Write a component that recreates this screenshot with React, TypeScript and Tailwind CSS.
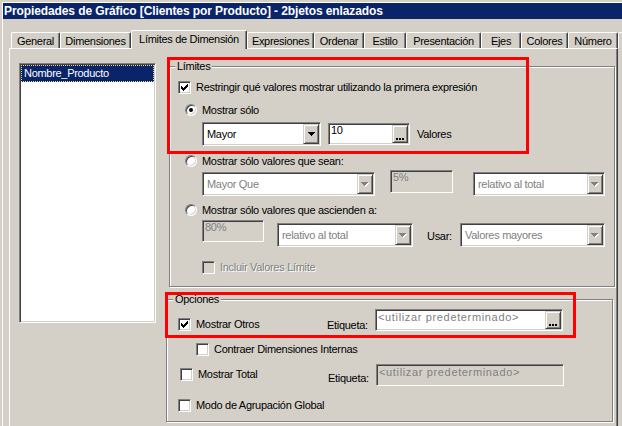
import React from "react";

const sunken =
  "border border-t-[#808080] border-l-[#808080] border-r-white border-b-white shadow-[inset_1px_1px_0_#404040,inset_-1px_-1px_0_#d4d0c8] p-[1px]";
const raised =
  "border border-t-[#d4d0c8] border-l-[#d4d0c8] border-r-[#404040] border-b-[#404040] shadow-[inset_1px_1px_0_#fff,inset_-1px_-1px_0_#808080] bg-[#d4d0c8]";
const etched =
  "relative border border-[#808080] shadow-[inset_1px_1px_0_#fff,1px_1px_0_#fff] flex flex-col items-start";
const disabledText = "text-[#808080] [text-shadow:1px_1px_0_#fff]";

const ARROW = "M0 0h7v1h-1v1h-1v1h-1v1h-1v-1h-1v-1h-1v-1h-1z";

function Arrow({ disabled }: { disabled?: boolean }) {
  if (disabled) {
    return (
      <svg width="8" height="5" viewBox="0 0 8 5" className="block">
        <path d={ARROW} transform="translate(1 1)" fill="#fff" />
        <path d={ARROW} fill="#808080" />
      </svg>
    );
  }
  return (
    <svg width="7" height="4" viewBox="0 0 7 4" className="block">
      <path d={ARROW} fill="#000" />
    </svg>
  );
}

function CheckMark() {
  const cols = [
    [0, 2],
    [1, 3],
    [2, 4],
    [3, 3],
    [4, 2],
    [5, 1],
    [6, 0],
  ];
  return (
    <svg width="9" height="9" viewBox="0 0 9 9" className="block">
      {cols.map(([x, y]) => (
        <rect key={x} x={x + 1} y={y + 1} width="1" height="3" fill="#000" />
      ))}
    </svg>
  );
}

function Check({ checked, disabled }: { checked?: boolean; disabled?: boolean }) {
  return (
    <div
      className={`${sunken} w-[13px] h-[13px] shrink-0 ${disabled ? "bg-[#d4d0c8]" : "bg-white"}`}
    >
      {checked && <CheckMark />}
    </div>
  );
}

function Radio({ checked }: { checked?: boolean }) {
  return (
    <div className="w-[12px] h-[12px] shrink-0 rounded-full border border-t-[#808080] border-l-[#808080] border-r-white border-b-white shadow-[inset_1px_1px_0_#404040,inset_-1px_-1px_0_#d4d0c8] bg-white flex items-center justify-center">
      {checked && <div className="w-[4px] h-[4px] rounded-full bg-black" />}
    </div>
  );
}

function Combo({
  className,
  text,
  disabled,
}: {
  className: string;
  text: string;
  disabled?: boolean;
}) {
  return (
    <div className={`${sunken} flex bg-white h-[24px] shrink-0 ${className}`}>
      <div
        className={`flex-1 flex items-center pl-[3px] whitespace-nowrap overflow-hidden ${
          disabled ? "text-[#808080]" : "text-black"
        }`}
      >
        {text}
      </div>
      <div className={`${raised} w-[16px] flex items-center justify-center`}>
        <Arrow disabled={disabled} />
      </div>
    </div>
  );
}

function DotsButton() {
  return (
    <div className={`${raised} w-[16px] flex items-end justify-center pb-[2px]`}>
      <svg width="8" height="2" viewBox="0 0 8 2" className="block">
        <rect x="0" y="0" width="2" height="2" fill="#000" />
        <rect x="3" y="0" width="2" height="2" fill="#000" />
        <rect x="6" y="0" width="2" height="2" fill="#000" />
      </svg>
    </div>
  );
}

function Edit({
  className,
  text,
  greyBg,
  greyText,
  dots,
  wide,
}: {
  className: string;
  text: string;
  greyBg?: boolean;
  greyText?: boolean;
  dots?: boolean;
  wide?: boolean;
}) {
  return (
    <div className={`${sunken} flex shrink-0 ${greyBg ? "bg-[#d4d0c8]" : "bg-white"} ${className}`}>
      <div
        className={`flex-1 pl-[1px] -mt-[1px] whitespace-nowrap overflow-hidden ${
          greyText ? "text-[#808080]" : "text-black"
        } ${wide ? "tracking-[0.65px] pt-[1px]" : ""}`}
      >
        {text}
      </div>
      {dots && <DotsButton />}
    </div>
  );
}

const tabs: { label: string; cls: string; selected?: boolean }[] = [
  { label: "General", cls: "w-[49px]" },
  { label: "Dimensiones", cls: "w-[71px]" },
  { label: "Límites de Dimensión", cls: "w-[116px]", selected: true },
  { label: "Expresiones", cls: "w-[67px]" },
  { label: "Ordenar", cls: "w-[50px]" },
  { label: "Estilo", cls: "w-[42px]" },
  { label: "Presentación", cls: "w-[75px]" },
  { label: "Ejes", cls: "w-[40px]" },
  { label: "Colores", cls: "w-[47px]" },
  { label: "Número", cls: "w-[50px]" },
];

export default function App() {
  return (
    <div className="relative w-[622px] h-[426px] overflow-hidden bg-[#d4d0c8] pt-[3px] pl-[3px] shadow-[inset_2px_2px_0_#d4d0c8,inset_3px_3px_0_#fff] font-['Liberation_Sans',Arial,sans-serif] text-[11px] leading-[13px] tracking-[-0.3px] text-black flex flex-col">
      {/* title bar */}
      <div className="h-[16px] shrink-0 bg-[#0a246a] text-white font-bold text-[12px] tracking-[-0.1px] flex items-center pl-[1px] whitespace-nowrap">
        Propiedades de Gráfico [Clientes por Producto] - 2bjetos enlazados
      </div>

      {/* tabs */}
      <div className="mt-[11px] h-[18px] shrink-0 flex items-end pl-[8px]">
        {tabs.map((t) =>
          t.selected ? (
            <div
              key={t.label}
              className={`${t.cls} relative z-10 h-[19px] -mb-[1px] shrink-0 bg-[#d4d0c8] border-t border-l border-white border-r border-r-[#404040] shadow-[inset_-1px_0_0_#808080] rounded-tl-[2px] rounded-tr-[2px] flex justify-center pt-[2px] whitespace-nowrap`}
            >
              {t.label}
            </div>
          ) : (
            <div
              key={t.label}
              className={`${t.cls} h-[16px] shrink-0 border-t border-l border-white border-r border-r-[#404040] shadow-[inset_-1px_0_0_#808080] rounded-tl-[2px] rounded-tr-[2px] flex justify-center pt-[2px] whitespace-nowrap`}
            >
              {t.label}
            </div>
          )
        )}
        <div className="w-[4px] h-[16px] shrink-0 border-t border-l border-white rounded-tl-[2px]" />
      </div>

      {/* tab panel */}
      <div className="ml-[6px] w-[609px] flex-1 border-t border-l border-white border-r border-r-[#404040] shadow-[inset_-1px_0_0_#808080] flex items-start">
        {/* list box */}
        <div className={`${sunken} bg-white w-[137px] h-[260px] ml-[9px] mt-[14px] shrink-0`}>
          <div className="h-[17px] bg-[#0a246a] text-white border border-dotted border-[#e8d48c] flex items-center pl-[2px] whitespace-nowrap">
            Nombre_Producto
          </div>
        </div>

        {/* right column */}
        <div className="flex flex-col items-start">
          {/* Límites */}
          <div className={`${etched} ml-[13px] mt-[17px] w-[446px] h-[221px]`}>
            <span className="absolute left-[5px] -top-[7px] px-[2px] bg-[#d4d0c8]">Límites</span>
            <div className="ml-[8px] mt-[14px] h-[13px] flex items-center">
              <Check checked />
              <span className="ml-[5px] whitespace-nowrap">
                Restringir qué valores mostrar utilizando la primera expresión
              </span>
            </div>
            <div className="ml-[15px] mt-[10px] h-[12px] flex items-center">
              <Radio checked />
              <span className="ml-[5px] mt-[1px] whitespace-nowrap">Mostrar sólo</span>
            </div>
            <div className="ml-[32px] mt-[6px] flex items-center">
              <Combo className="w-[119px]" text="Mayor" />
              <Edit className="ml-[7px] w-[82px] h-[22px]" text="10" dots />
              <span className="ml-[7px]">Valores</span>
            </div>
            <div className="ml-[15px] mt-[9px] h-[12px] flex items-center">
              <Radio />
              <span className="ml-[5px] mt-[1px] whitespace-nowrap">Mostrar sólo valores que sean:</span>
            </div>
            <div className="ml-[32px] mt-[3px] flex items-start">
              <Combo className="mt-[2px] w-[173px]" text="Mayor Que" disabled />
              <Edit className="ml-[15px] w-[63px] h-[23px]" text="5%" greyBg greyText />
              <Combo className="ml-[20px] mt-[2px] w-[132px]" text="relativo al total" disabled />
            </div>
            <div className="ml-[15px] mt-[8px] h-[12px] flex items-center">
              <Radio />
              <span className="ml-[5px] whitespace-nowrap">Mostrar sólo valores que ascienden a:</span>
            </div>
            <div className="ml-[32px] mt-[4px] flex items-start">
              <Edit className="w-[62px] h-[22px]" text="80%" greyBg greyText />
              <Combo className="ml-[13px] mt-[3px] w-[136px]" text="relativo al total" disabled />
              <div className="ml-[14px] mt-[3px] h-[24px] w-[33px] flex items-center pt-[2px]">Usar:</div>
              <Combo className="mt-[3px] w-[145px]" text="Valores mayores" disabled />
            </div>
            <div className="ml-[32px] mt-[14px] h-[13px] flex items-center">
              <Check disabled />
              <span className={`ml-[5px] whitespace-nowrap ${disabledText}`}>Incluir Valores Límite</span>
            </div>
          </div>

          {/* Opciones */}
          <div className={`${etched} ml-[10px] mt-[12px] w-[447px] h-[123px]`}>
            <span className="absolute left-[6px] -top-[7px] px-[2px] bg-[#d4d0c8]">Opciones</span>
            <div className="ml-[11px] mt-[9px] flex items-start">
              <div className="w-[149px] mt-[9px] h-[13px] flex items-center">
                <Check checked />
                <span className="ml-[5px] whitespace-nowrap">Mostrar Otros</span>
              </div>
              <div className="w-[48px] mt-[10px] h-[13px] flex items-center whitespace-nowrap">Etiqueta:</div>
              <Edit className="w-[188px] h-[22px]" text="<utilizar predeterminado>" greyText dots wide />
            </div>
            <div className="ml-[29px] mt-[11px] h-[13px] flex items-center">
              <Check />
              <span className="ml-[5px] whitespace-nowrap">Contraer Dimensiones Internas</span>
            </div>
            <div className="ml-[13px] mt-[8px] flex items-start">
              <div className="w-[148px] mt-[4px] h-[13px] flex items-center">
                <Check />
                <span className="ml-[5px] whitespace-nowrap">Mostrar Total</span>
              </div>
              <div className="w-[48px] mt-[8px] h-[13px] flex items-center whitespace-nowrap">Etiqueta:</div>
              <Edit className="w-[188px] h-[22px]" text="<utilizar predeterminado>" greyBg greyText wide />
            </div>
            <div className="ml-[11px] mt-[13px] h-[13px] flex items-center">
              <Check />
              <span className="ml-[5px] whitespace-nowrap">Modo de Agrupación Global</span>
            </div>
          </div>
        </div>
      </div>

      {/* red highlight overlays */}
      <div className="absolute left-[167px] top-[57px] w-[362px] h-[97px] border-[3px] border-[#ff0000] pointer-events-none" />
      <div className="absolute left-[165px] top-[292px] w-[411px] h-[46px] border-[3px] border-[#ff0000] pointer-events-none" />
    </div>
  );
}
